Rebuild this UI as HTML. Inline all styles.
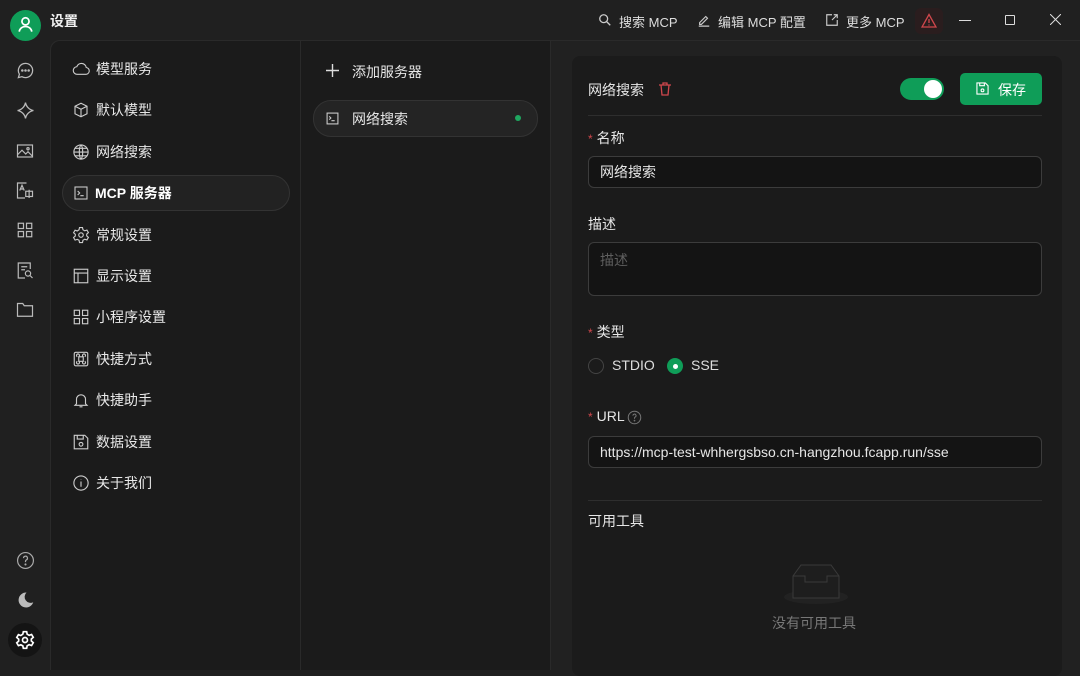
<!DOCTYPE html>
<html><head><meta charset="utf-8"><style>
*{box-sizing:border-box;margin:0;padding:0}
body{width:1080px;height:670px;background:#202020;font-family:"Liberation Sans","Noto Sans CJK SC",sans-serif;color:#e6e6e6;position:relative;overflow:hidden;font-size:14px}
.abs{position:absolute}
svg{display:block}
.rail svg{position:absolute;left:16px}
.menu .it{position:absolute;left:62px;width:228px;height:36px;display:flex;align-items:center;padding-left:10px;font-size:14px;color:#e8e8e8}
.menu .it svg{margin-right:6px}
.lbl{position:absolute;left:588px;font-size:14px;color:#e6e6e6}
.req{color:#d0474c;margin-right:4px;font-size:12px}
.inp{position:absolute;left:588px;width:454px;border:1px solid #3c3c3c;border-radius:6px;background:#141414;padding-left:11px;display:flex;align-items:center;font-size:14px;color:#e6e6e6}
</style></head><body>
<div class="abs" style="left:10px;top:10px;width:31px;height:31px;border-radius:50%;background:#0f9d58"></div>
<svg class="abs" style="left:16px;top:15px" width="19" height="19" viewBox="0 0 24 24" fill="none" stroke="#fff" stroke-width="2.2"><circle cx="12" cy="8" r="4.5"/><path d="M4 21c1-4.5 4.5-6.5 8-6.5s7 2 8 6.5"/></svg>
<div class="abs" style="left:50px;top:11px;font-size:14px;font-weight:bold;color:#f0f0f0">设置</div>
<svg class="abs" style="left:598px;top:13px" width="14" height="14" viewBox="0 0 16 16" fill="none" stroke="#ccc" stroke-width="1.5"><circle cx="6.5" cy="6.5" r="4.5"/><path d="M10 10l4 4"/></svg>
<div class="abs" style="left:619px;top:12px;font-size:13px;color:#ddd">搜索 MCP</div>
<svg class="abs" style="left:697px;top:13px" width="14" height="14" viewBox="0 0 16 16" fill="none" stroke="#ccc" stroke-width="1.3"><path d="M3 11l7-7 2 2-7 7H3zM2 15h12"/></svg>
<div class="abs" style="left:718px;top:12px;font-size:13px;color:#ddd">编辑 MCP 配置</div>
<svg class="abs" style="left:825px;top:13px" width="14" height="14" viewBox="0 0 16 16" fill="none" stroke="#ccc" stroke-width="1.3"><path d="M8 2H2v12h12V8M10 2h4v4M14 2L8 8"/></svg>
<div class="abs" style="left:846px;top:12px;font-size:13px;color:#ddd">更多 MCP</div>
<div class="abs" style="left:915px;top:8px;width:28px;height:26px;border-radius:6px;background:#2a1d1e"></div>
<svg class="abs" style="left:921px;top:13px" width="16" height="15" viewBox="0 0 16 15" fill="none" stroke="#d0474c" stroke-width="1.3"><path d="M8 1.5L15 14H1z"/><path d="M8 6v4M8 11.5v1"/></svg>
<div class="abs" style="left:959px;top:20px;width:12px;height:1px;background:#ddd"></div>
<div class="abs" style="left:1005px;top:15px;width:10px;height:10px;border:1px solid #ddd;border-radius:1px"></div>
<svg class="abs" style="left:1050px;top:14px" width="11" height="11" viewBox="0 0 11 11" stroke="#ddd" stroke-width="1"><path d="M0 0l11 11M11 0L0 11"/></svg>

<div class="rail">
<svg style="top:61px" width="19" height="19" viewBox="0 0 24 24" fill="none" stroke="#bbb" stroke-width="1.6"><path d="M12 3a9 9 0 1 1-4.5 16.8L3 21l1.3-4.3A9 9 0 0 1 12 3z"/><circle cx="8" cy="12" r=".8" fill="#bbb"/><circle cx="12" cy="12" r=".8" fill="#bbb"/><circle cx="16" cy="12" r=".8" fill="#bbb"/></svg>
<svg style="top:101px" width="19" height="19" viewBox="0 0 24 24" fill="none" stroke="#bbb" stroke-width="1.7"><path d="M12 2c.8 5 5 9.2 10 10-5 .8-9.2 5-10 10-.8-5-5-9.2-10-10 5-.8 9.2-5 10-10z"/></svg>
<svg style="top:142px" width="18" height="18" viewBox="0 0 24 24" fill="none" stroke="#bbb" stroke-width="1.6"><rect x="2" y="4" width="20" height="16"/><path d="M2 17l6-6 5 5 3-3 6 6"/><circle cx="16" cy="9" r="1.5"/></svg>
<svg style="top:181px" width="18" height="19" viewBox="0 0 24 24" fill="none" stroke="#bbb" stroke-width="1.6"><path d="M14 2H2v20h10"/><path d="M5 12l3-7 3 7M6 10h4"/><rect x="13" y="13" width="9" height="7"/><path d="M17.5 11v11"/></svg>
<svg style="top:221px" width="18" height="18" viewBox="0 0 24 24" fill="none" stroke="#bbb" stroke-width="1.6"><rect x="3" y="3" width="7" height="7"/><rect x="14" y="3" width="7" height="7"/><rect x="3" y="14" width="7" height="7"/><rect x="14" y="14" width="7" height="7"/></svg>
<svg style="top:261px" width="18" height="19" viewBox="0 0 24 24" fill="none" stroke="#bbb" stroke-width="1.6"><path d="M19 10V2H3v20h9"/><path d="M7 7h8M7 11h5"/><circle cx="16" cy="16" r="3.5"/><path d="M18.5 18.5L22 22"/></svg>
<svg style="top:301px" width="18" height="17" viewBox="0 0 24 22" fill="none" stroke="#bbb" stroke-width="1.6"><path d="M2 3h7l2 3h11v14H2z"/></svg>
<svg style="top:551px" width="19" height="19" viewBox="0 0 24 24" fill="none" stroke="#aaa" stroke-width="1.5"><circle cx="12" cy="12" r="10"/><path d="M9.5 9a2.5 2.5 0 1 1 3.5 2.3c-.7.4-1 1-1 1.7v1"/><circle cx="12" cy="17" r=".6" fill="#aaa"/></svg>
<svg style="top:591px" width="18" height="18" viewBox="0 0 24 24" fill="#bbb"><path d="M14 2a10 10 0 1 0 9 13A8 8 0 0 1 14 2z"/></svg>
</div>
<div class="abs" style="left:8px;top:623px;width:34px;height:34px;border-radius:50%;background:#141414"></div>
<svg class="abs" style="left:15px;top:630px" width="20" height="20" viewBox="0 0 24 24" fill="none" stroke="#fff" stroke-width="2"><circle cx="12" cy="12" r="3"/><path d="M10 2h4l.6 3 2.4 1.4 2.9-1 2 3.4-2.3 2v2.4l2.3 2-2 3.4-2.9-1-2.4 1.4-.6 3h-4l-.6-3L7 17.8l-2.9 1-2-3.4 2.3-2v-2.4l-2.3-2 2-3.4 2.9 1L9.4 5z"/></svg>

<div class="abs" style="left:50px;top:40px;width:1030px;height:630px;background:#1b1b1b;border-top-left-radius:10px;border-top:1px solid #2a2a2a;border-left:1px solid #2a2a2a"></div>
<div class="abs" style="left:300px;top:41px;width:1px;height:629px;background:#2a2a2a"></div>
<div class="abs" style="left:550px;top:41px;width:530px;height:629px;background:#212121;border-left:1px solid #2a2a2a"></div>

<div class="menu">
<div class="it" style="top:51px"><svg width="18" height="18" viewBox="0 0 24 24" fill="none" stroke="#ccc" stroke-width="1.5"><path d="M7 19a5 5 0 0 1-.6-10A6.5 6.5 0 0 1 19 10a4.5 4.5 0 0 1-1 9z"/></svg>模型服务</div>
<div class="it" style="top:92px"><svg width="18" height="18" viewBox="0 0 24 24" fill="none" stroke="#ccc" stroke-width="1.5"><path d="M12 3l8 4v10l-8 4-8-4V7zM4 7l8 4 8-4M12 11v10"/></svg>默认模型</div>
<div class="it" style="top:134px"><svg width="18" height="18" viewBox="0 0 24 24" fill="none" stroke="#ccc" stroke-width="1.5"><circle cx="12" cy="12" r="9.5"/><path d="M2.5 12h19M12 2.5c-3 3-3 16 0 19M12 2.5c3 3 3 16 0 19M4 7h16M4 17h16"/></svg>网络搜索</div>
<div class="it" style="top:175px;border:1px solid #333;background:#222;border-radius:18px;font-weight:bold;color:#fff"><svg width="16" height="16" viewBox="0 0 24 24" fill="none" stroke="#ccc" stroke-width="1.6"><rect x="3" y="3" width="18" height="18"/><path d="M7 9l3 3-3 3M11 16h5"/></svg>MCP 服务器</div>
<div class="it" style="top:217px"><svg width="18" height="18" viewBox="0 0 24 24" fill="none" stroke="#ccc" stroke-width="1.5"><circle cx="12" cy="12" r="3"/><path d="M10 2h4l.6 3 2.4 1.4 2.9-1 2 3.4-2.3 2v2.4l2.3 2-2 3.4-2.9-1-2.4 1.4-.6 3h-4l-.6-3L7 17.8l-2.9 1-2-3.4 2.3-2v-2.4l-2.3-2 2-3.4 2.9 1L9.4 5z"/></svg>常规设置</div>
<div class="it" style="top:258px"><svg width="18" height="18" viewBox="0 0 24 24" fill="none" stroke="#ccc" stroke-width="1.5"><rect x="3" y="3" width="18" height="18"/><path d="M3 8h18M8 8v13"/></svg>显示设置</div>
<div class="it" style="top:299px"><svg width="18" height="18" viewBox="0 0 24 24" fill="none" stroke="#ccc" stroke-width="1.5"><rect x="3" y="3" width="7" height="7"/><rect x="14" y="3" width="7" height="7"/><rect x="3" y="14" width="7" height="7"/><rect x="14" y="14" width="7" height="7"/></svg>小程序设置</div>
<div class="it" style="top:341px"><svg width="18" height="18" viewBox="0 0 24 24" fill="none" stroke="#ccc" stroke-width="1.5"><rect x="3" y="3" width="18" height="18" rx="2"/><path d="M9 9h6v6H9zM9 9a2 2 0 1 0-2 0M15 9a2 2 0 1 1 2 0M9 15a2 2 0 1 1-2 0M15 15a2 2 0 1 0 2 0"/></svg>快捷方式</div>
<div class="it" style="top:382px"><svg width="18" height="18" viewBox="0 0 24 24" fill="none" stroke="#ccc" stroke-width="1.5"><path d="M6 17V11a6 6 0 0 1 12 0v6l2 2H4zM10 21h4"/></svg>快捷助手</div>
<div class="it" style="top:424px"><svg width="18" height="18" viewBox="0 0 24 24" fill="none" stroke="#ccc" stroke-width="1.5"><path d="M3 3h14l4 4v14H3z"/><path d="M7 3v5h8V3"/><circle cx="12" cy="15" r="2.5"/></svg>数据设置</div>
<div class="it" style="top:465px"><svg width="18" height="18" viewBox="0 0 24 24" fill="none" stroke="#ccc" stroke-width="1.5"><circle cx="12" cy="12" r="9.5"/><path d="M12 10v7M12 7v.5"/></svg>关于我们</div>
</div>

<svg class="abs" style="left:326px;top:64px" width="13" height="13" viewBox="0 0 12 12" stroke="#ddd" stroke-width="1.3"><path d="M6 0v12M0 6h12"/></svg>
<div class="abs" style="left:352px;top:62px;font-size:14px;color:#e6e6e6">添加服务器</div>
<div class="abs" style="left:313px;top:100px;width:225px;height:37px;border:1px solid #333;background:#242424;border-radius:18px"></div>
<svg class="abs" style="left:326px;top:112px" width="13" height="13" viewBox="0 0 24 24" fill="none" stroke="#ccc" stroke-width="2"><rect x="2" y="2" width="20" height="20"/><path d="M6 8l3 3-3 3M10 16h6"/></svg>
<div class="abs" style="left:352px;top:109px;font-size:14px;color:#e6e6e6">网络搜索</div>
<div class="abs" style="left:515px;top:115px;width:6px;height:6px;border-radius:50%;background:#1fa760"></div>

<div class="abs" style="left:572px;top:56px;width:490px;height:620px;background:#1b1b1b;border-radius:8px"></div>
<div class="abs" style="left:588px;top:80px;font-size:14px;color:#e6e6e6">网络搜索</div>
<svg class="abs" style="left:659px;top:82px" width="12" height="14" viewBox="0 0 12 14" fill="none" stroke="#d0474c" stroke-width="1.3"><path d="M0 3h12M4 3V1h4v2M2 3l1 10h6l1-10"/></svg>
<div class="abs" style="left:900px;top:78px;width:44px;height:22px;border-radius:11px;background:#0f9d58"></div>
<div class="abs" style="left:924px;top:80px;width:18px;height:18px;border-radius:50%;background:#fff"></div>
<div class="abs" style="left:960px;top:73px;width:82px;height:32px;border-radius:5px;background:#0f9d58"></div>
<svg class="abs" style="left:976px;top:82px" width="13" height="13" viewBox="0 0 14 14" fill="none" stroke="#fff" stroke-width="1.2"><path d="M1 1h9l3 3v9H1z"/><path d="M4 1v3h5V1"/><circle cx="7" cy="9" r="1.5"/></svg>
<div class="abs" style="left:998px;top:80px;font-size:14px;color:#fff">保存</div>
<div class="abs" style="left:588px;top:115px;width:454px;height:1px;background:#2e2e2e"></div>

<div class="lbl" style="top:128px"><span class="req">*</span>名称</div>
<div class="inp" style="top:156px;height:32px">网络搜索</div>
<div class="lbl" style="top:214px">描述</div>
<div class="inp" style="top:242px;height:54px;align-items:flex-start;padding-top:7px;color:#5e5e5e">描述</div>
<div class="lbl" style="top:322px"><span class="req">*</span>类型</div>
<div class="abs" style="left:588px;top:358px;width:16px;height:16px;border-radius:50%;border:1px solid #444"></div>
<div class="abs" style="left:612px;top:357px;font-size:14px;color:#ddd">STDIO</div>
<div class="abs" style="left:667px;top:358px;width:16px;height:16px;border-radius:50%;background:#0f9d58"></div>
<div class="abs" style="left:673px;top:364px;width:5px;height:5px;border-radius:50%;background:#fff"></div>
<div class="abs" style="left:691px;top:357px;font-size:14px;color:#ddd">SSE</div>
<div class="lbl" style="top:408px"><span class="req">*</span>URL</div>
<svg class="abs" style="left:627px;top:410px" width="15" height="15" viewBox="0 0 24 24" fill="none" stroke="#777" stroke-width="1.6"><circle cx="12" cy="12" r="10"/><path d="M9.5 9a2.5 2.5 0 1 1 3.5 2.3c-.7.4-1 1-1 1.7v1"/><circle cx="12" cy="17" r=".6"/></svg>
<div class="inp" style="top:436px;height:32px">https://mcp-test-whhergsbso.cn-hangzhou.fcapp.run/sse</div>
<div class="abs" style="left:588px;top:500px;width:454px;height:1px;background:#2e2e2e"></div>
<div class="lbl" style="top:511px">可用工具</div>
<div class="abs" style="left:784px;top:590px;width:64px;height:14px;border-radius:50%;background:#222"></div>
<svg class="abs" style="left:792px;top:562px" width="48" height="38" viewBox="0 0 48 38" fill="#1e1e1e" stroke="#3a3a3a" stroke-width="1"><path d="M1 14L9 3h30l8 11v22H1z"/><path d="M1 14h12v6h22v-6h12" fill="none"/></svg>
<div class="abs" style="left:772px;top:613px;font-size:14px;color:#777">没有可用工具</div>
</body></html>
